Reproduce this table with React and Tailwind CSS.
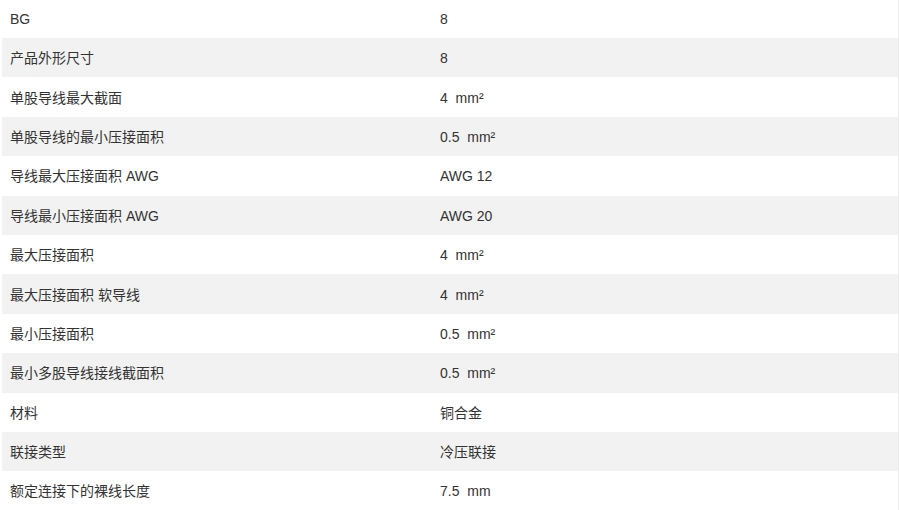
const rows = [
    ["BG", "8"],
    ["产品外形尺寸", "8"],
    ["单股导线最大截面", "4  mm²"],
    ["单股导线的最小压接面积", "0.5  mm²"],
    ["导线最大压接面积 AWG", "AWG 12"],
    ["导线最小压接面积 AWG", "AWG 20"],
    ["最大压接面积", "4  mm²"],
    ["最大压接面积 软导线", "4  mm²"],
    ["最小压接面积", "0.5  mm²"],
    ["最小多股导线接线截面积", "0.5  mm²"],
    ["材料", "铜合金"],
    ["联接类型", "冷压联接"],
    ["额定连接下的裸线长度", "7.5  mm"],
];

function App() {
    return (
        <div
            className="w-[900px] h-[510px] overflow-hidden bg-white pl-[2px] text-[14px] text-[#333]"
            style={{ fontFamily: '"Liberation Sans", "Noto Sans CJK SC", sans-serif' }}
        >
            <div className="w-[897px] -mt-[1.4px] border-r border-[#eeeeee]">
                {rows.map(([label, value], i) => (
                    <div
                        key={label}
                        className={`flex h-[39.4px] items-center pt-[2px] ${i % 2 === 1 ? "bg-[#f2f2f2]" : "bg-white"}`}
                    >
                        <div className="w-[430px] pl-2 whitespace-pre">{label}</div>
                        <div className="flex-1 pl-2 whitespace-pre">{value}</div>
                    </div>
                ))}
            </div>
        </div>
    );
}

export default App;
